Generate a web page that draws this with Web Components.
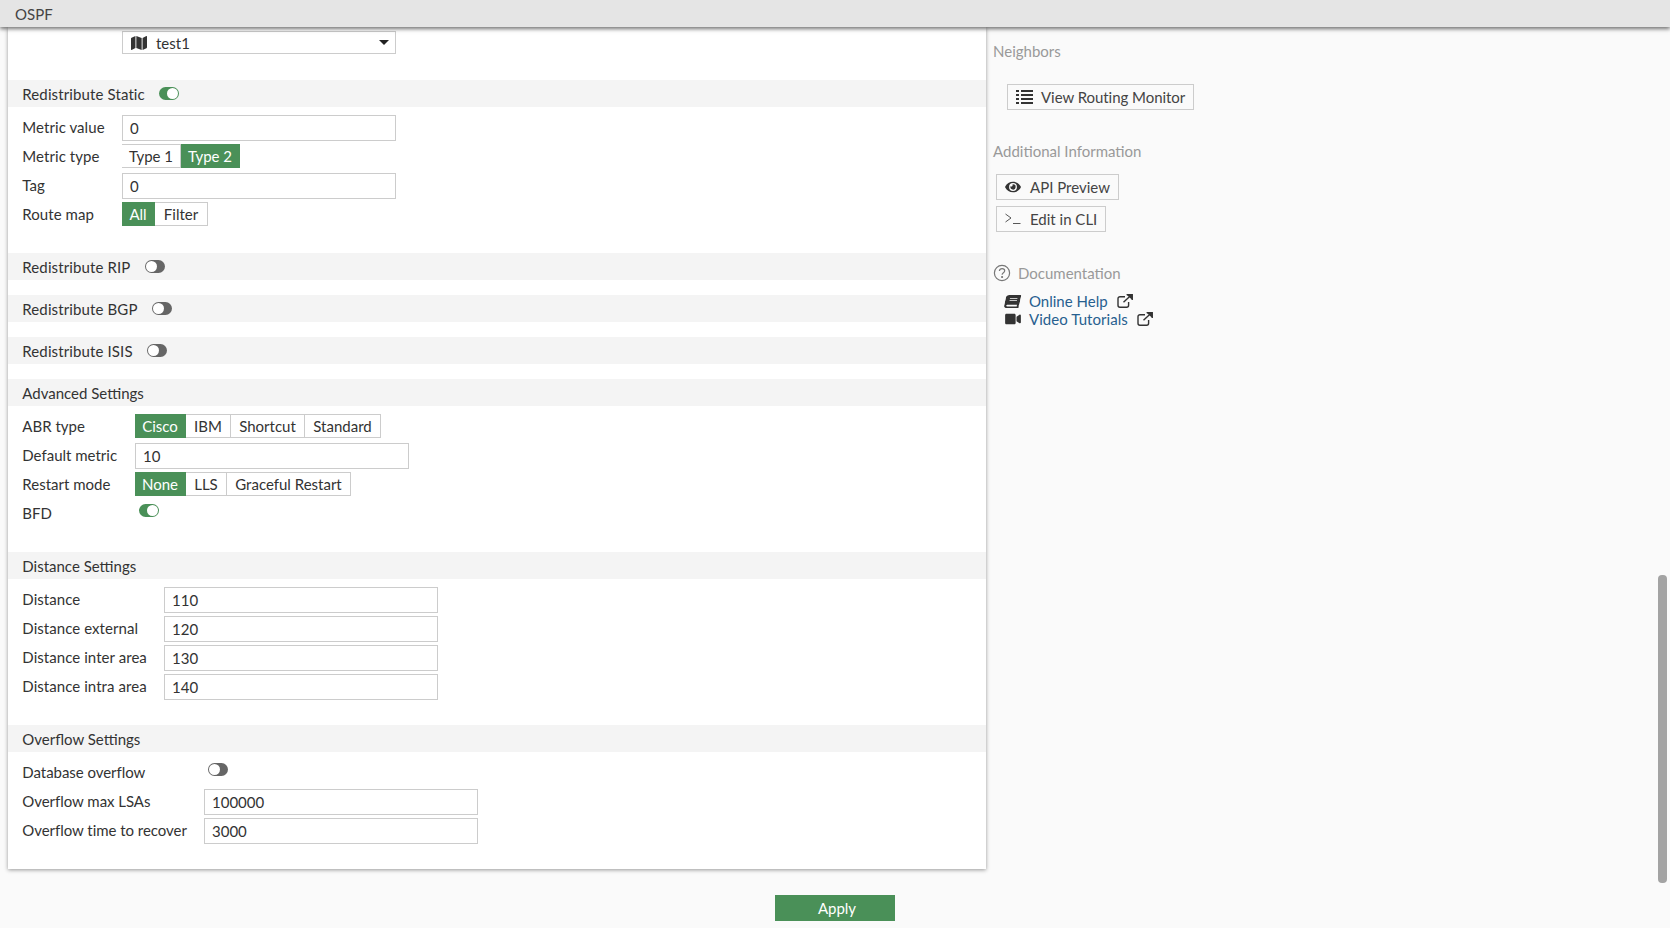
<!DOCTYPE html>
<html>
<head>
<meta charset="utf-8">
<title>OSPF</title>
<style>
  html, body { margin: 0; height: 100%; }
  body { background: #fafafa; color: #333; font: 15px Lato, "Open Sans", sans-serif; overflow: hidden; position: relative; }
</style>
</head>
<body>
<fg-topbar>OSPF</fg-topbar>
<fg-page>
  <fg-panel>
    <fg-row label-w="99" slot-only style="padding-top:4px;padding-bottom:26px;min-height:23px">
      <fg-select>test1</fg-select>
    </fg-row>

    <fg-section label="Redistribute Static" on label-w="99" style="--ls:.07px">
      <fg-row label="Metric value"><fg-input>0</fg-input></fg-row>
      <fg-row label="Metric type"><fg-seg options="Type 1|Type 2" widths="59|59" active="1"></fg-seg></fg-row>
      <fg-row label="Tag"><fg-input>0</fg-input></fg-row>
      <fg-row label="Route map"><fg-seg options="All|Filter" widths="33|53" active="0"></fg-seg></fg-row>
    </fg-section>

    <fg-section label="Redistribute RIP" off></fg-section>
    <fg-section label="Redistribute BGP" off></fg-section>
    <fg-section label="Redistribute ISIS" off></fg-section>

    <fg-section label="Advanced Settings" label-w="112">
      <fg-row label="ABR type"><fg-seg options="Cisco|IBM|Shortcut|Standard" widths="51|45|74|76" active="0"></fg-seg></fg-row>
      <fg-row label="Default metric"><fg-input>10</fg-input></fg-row>
      <fg-row label="Restart mode"><fg-seg options="None|LLS|Graceful Restart" widths="51|41|124" active="0"></fg-seg></fg-row>
      <fg-row label="BFD"><fg-toggle on inrow></fg-toggle></fg-row>
    </fg-section>

    <fg-section label="Distance Settings" label-w="141" style="--ls:.06px">
      <fg-row label="Distance"><fg-input>110</fg-input></fg-row>
      <fg-row label="Distance external"><fg-input>120</fg-input></fg-row>
      <fg-row label="Distance inter area"><fg-input>130</fg-input></fg-row>
      <fg-row label="Distance intra area"><fg-input>140</fg-input></fg-row>
    </fg-section>

    <fg-section label="Overflow Settings" label-w="181" style="--ls:-.04px">
      <fg-row label="Database overflow"><fg-toggle inrow></fg-toggle></fg-row>
      <fg-row label="Overflow max LSAs"><fg-input>100000</fg-input></fg-row>
      <fg-row label="Overflow time to recover"><fg-input>3000</fg-input></fg-row>
    </fg-section>
  </fg-panel>

  <fg-side>
    <fg-side-title>Neighbors</fg-side-title>
    <fg-btn icon="list" style="margin:23px 0 0 14px;letter-spacing:-.05px">View Routing Monitor</fg-btn>
    <fg-side-title style="margin-top:31px">Additional Information</fg-side-title>
    <fg-btn icon="eye" gap="9" style="margin:13px 0 0 3px">API Preview</fg-btn>
    <fg-btn icon="terminal" gap="9" style="margin:6px 0 0 3px">Edit in CLI</fg-btn>
    <fg-side-title icon="help" style="margin-top:31px">Documentation</fg-side-title>
    <fg-doc-link icon="book" style="margin-top:9px">Online Help</fg-doc-link>
    <fg-doc-link icon="video" style="letter-spacing:.06px">Video Tutorials</fg-doc-link>
  </fg-side>
</fg-page>
<fg-footer>Apply</fg-footer>
<fg-scrollbar></fg-scrollbar>

<script>
const ICONS = {
  list: '<svg width="17" height="14" viewBox="0 0 17 14" fill="#333"><rect x="0" y="0" width="3" height="2"/><rect x="5" y="0" width="12" height="2"/><rect x="0" y="4" width="3" height="2"/><rect x="5" y="4" width="12" height="2"/><rect x="0" y="8" width="3" height="2"/><rect x="5" y="8" width="12" height="2"/><rect x="0" y="12" width="3" height="2"/><rect x="5" y="12" width="12" height="2"/></svg>',
  eye: '<svg width="16" height="14" viewBox="0 0 576 512" fill="#333"><path d="M572.52 241.4C518.29 135.59 410.93 64 288 64S57.68 135.64 3.48 241.41a32.35 32.35 0 0 0 0 29.19C57.71 376.41 165.07 448 288 448s230.32-71.64 284.52-177.41a32.35 32.35 0 0 0 0-29.19zM288 400a144 144 0 1 1 144-144 143.93 143.93 0 0 1-144 144zm0-240a95.31 95.31 0 0 0-25.31 3.79 47.85 47.85 0 0 1-66.9 66.9A95.78 95.78 0 1 0 288 160z"/></svg>',
  terminal: '<svg width="16" height="12" viewBox="0 0 16 12" fill="none" stroke="#444" stroke-width=".9"><path d="M.5 1l5.5 4-5.5 4"/><path d="M8 10.5h7.5"/></svg>',
  help: '<svg width="18" height="18" viewBox="0 0 18 18" fill="none" stroke="#777" stroke-width="1.2"><circle cx="9" cy="9" r="7.6"/><path d="M6.4 7.1c0-1.6 1.2-2.5 2.7-2.5s2.6.9 2.6 2.2c0 1.9-2.6 1.9-2.6 3.9"/><circle cx="9.1" cy="13" r=".5" fill="#777"/></svg>',
  book: '<svg width="15" height="13" viewBox="0 0 448 512" preserveAspectRatio="none" fill="#333" style="transform:skewX(-12deg)"><path d="M448 360V24c0-13.3-10.7-24-24-24H96C43 0 0 43 0 96v320c0 53 43 96 96 96h328c13.3 0 24-10.7 24-24v-16c0-7.5-3.5-14.3-8.9-18.7-4.2-15.4-4.2-59.3 0-74.7 5.4-4.3 8.9-11.1 8.9-18.6zM128 134c0-3.3 2.7-6 6-6h212c3.3 0 6 2.7 6 6v20c0 3.3-2.7 6-6 6H134c-3.3 0-6-2.7-6-6v-20zm0 64c0-3.3 2.7-6 6-6h212c3.3 0 6 2.7 6 6v20c0 3.3-2.7 6-6 6H134c-3.3 0-6-2.7-6-6v-20zm253.4 250H96c-17.7 0-32-14.3-32-32 0-17.6 14.4-32 32-32h285.4c-1.9 17.1-1.9 46.9 0 64z"/></svg>',
  video: '<svg width="16" height="14" viewBox="0 0 576 512" fill="#333"><path d="M336.2 64H47.8C21.4 64 0 85.4 0 111.8v288.4C0 426.6 21.4 448 47.8 448h288.4c26.4 0 47.8-21.4 47.8-47.8V111.8c0-26.4-21.4-47.8-47.8-47.8zm189.4 37.7L416 177.3v157.4l109.6 75.5c21.2 14.6 50.4-.3 50.4-25.8V127.5c0-25.4-29.1-40.4-50.4-25.8z"/></svg>',
  external: '<svg width="16" height="14" viewBox="0 0 16 14" fill="none" stroke="#333" stroke-width="1.4"><path d="M8 2.7H3a2 2 0 0 0-2 2v6.6a2 2 0 0 0 2 2h6.6a2 2 0 0 0 2-2V8"/><path d="M6.5 8.2L14 1.2"/><path d="M9.6.7h5.7v5.4" stroke-width="1.3" fill="#333"/></svg>',
  map: '<svg width="16" height="16" viewBox="0 0 576 512" preserveAspectRatio="none" fill="#333"><path d="M0 117.66v346.32c0 11.32 11.43 19.06 21.94 14.86L160 416V32L20.12 87.95A32.006 32.006 0 0 0 0 117.66zM192 416l192 64V96L192 32v384zM554.06 33.16L416 96v384l139.88-55.95A31.996 31.996 0 0 0 576 394.34V48.02c0-11.32-11.43-19.06-21.94-14.86z"/></svg>'
};

// small helper so each element only states its css and markup
function define(name, css, html, setup) {
  customElements.define(name, class extends HTMLElement {
    connectedCallback() {
      const root = this.attachShadow({ mode: 'open' });
      root.innerHTML = `<style>${css}</style>` + (typeof html === 'function' ? html(this) : html);
      if (setup) setup(this, root);
    }
  });
}

define('fg-topbar', `
  :host { display: block; height: 27px; background: #e5e5e5; box-shadow: 0 2px 4px rgba(0,0,0,.55);
    position: relative; z-index: 2; padding-left: 15px; line-height: 29px; color: #444; }
`, '<slot></slot>');

define('fg-page', `
  :host { display: flex; height: 842px; align-items: flex-start; }
`, '<slot></slot>');

define('fg-panel', `
  :host { display: block; width: 978px; margin-left: 8px; background: #fff; box-shadow: 0 1px 4px rgba(0,0,0,.4); height: 842px; --label-w: 99px; }
`, '<slot></slot>');

define('fg-section', `
  :host { display: block; --label-w: 99px; }
  .bar { display: flex; align-items: center; height: 27px; background: #f4f4f4; padding-left: 14.3px; }
  .bar.with-toggle span { letter-spacing: .12px; }
  fg-toggle { margin-left: 14.5px; }
  .body { padding: 8px 0 22px; }
  :host(:not([has-body])) .body { padding: 0 0 15px; }
`, el => `
  <div class="bar ${el.hasAttribute('on') || el.hasAttribute('off') ? 'with-toggle' : ''}"><span>${el.getAttribute('label')}</span>${el.hasAttribute('on') ? '<fg-toggle on></fg-toggle>' : el.hasAttribute('off') ? '<fg-toggle></fg-toggle>' : ''}</div>
  <div class="body"><slot></slot></div>
`, el => {
  if (el.children.length) el.setAttribute('has-body', '');
  if (el.hasAttribute('label-w')) el.style.setProperty('--label-w', el.getAttribute('label-w') + 'px');
});

define('fg-row', `
  :host { display: grid; grid-template-columns: var(--label-w) 1fr; align-items: start; min-height: 26px; margin-bottom: 3px; padding-left: 15px; }
  :host([slot-only]) { margin-bottom: 0; }
  span { margin-left: -.7px; line-height: 24px; letter-spacing: var(--ls, 0); }
`, el => `<span>${el.getAttribute('label') || ''}</span><div><slot></slot></div>`);

define('fg-input', `
  :host { display: block; box-sizing: border-box; width: 274px; height: 26px; border: 1px solid #ccc; background: #fff; padding: 0 7px; line-height: 24px; }
`, '<slot></slot>');

define('fg-select', `
  :host { display: flex; align-items: center; box-sizing: border-box; width: 274px; height: 23px; border: 1px solid #ccc; padding: 0 6px 0 8px; line-height: 21px; }
  svg { flex: none; margin-right: 9px; }
  .t { padding-top: 2px; }
  .caret { margin-left: auto; width: 0; height: 0; border: 5px solid transparent; border-top: 5px solid #222; border-bottom: 0; }
`, `${ICONS.map}<span class="t"><slot></slot></span><span class="caret"></span>`);

define('fg-seg', `
  :host { display: flex; height: 24px; }
  span { box-sizing: border-box; border: 1px solid #ccc; border-left-width: 0; line-height: 22px; background: #fff; text-align: center; }
  span:first-child { border-left-width: 1px; padding-left: 1.5px; }
  .active { background: #4a9058; border-color: #4a9058; color: #fff; }
`, el => {
  const widths = el.getAttribute('widths').split('|');
  return el.getAttribute('options').split('|').map((o, i) =>
    `<span style="width:${widths[i]}px" class="${i === +el.getAttribute('active') ? 'active' : ''}">${o}</span>`).join('');
});

define('fg-toggle', `
  :host { display: inline-block; box-sizing: border-box; width: 20px; height: 13px; border-radius: 7px; background: #666; position: relative; flex: none; }
  :host([on]) { background: #4a9058; }
  :host([inrow]) { margin: 3px 0 0 4px; display: block; }
  i { position: absolute; left: 1px; top: 1px; width: 11px; height: 11px; border-radius: 50%; background: #fff; }
  :host([on]) i { left: 8px; }
`, '<i></i>');

define('fg-side', `
  :host { display: block; flex: 1; padding: 14px 0 0 7px; }
`, '<slot></slot>');

define('fg-side-title', `
  :host { display: flex; align-items: center; height: 20px; color: #999; }
  svg { margin-right: 7px; }
`, el => (el.getAttribute('icon') ? ICONS[el.getAttribute('icon')] : '') + '<slot></slot>');

define('fg-btn', `
  :host { display: flex; width: max-content; align-items: center; box-sizing: border-box; height: 26px; border: 1px solid #ccc; padding: 0 8px; color: #444; }
  svg { flex: none; margin-right: var(--gap, 8px); }
`, el => ICONS[el.getAttribute('icon')] + '<slot></slot>', el => {
  if (el.hasAttribute('gap')) el.style.setProperty('--gap', el.getAttribute('gap') + 'px');
});

define('fg-doc-link', `
  :host { display: flex; align-items: center; height: 18px; margin-left: 12px; color: #27608f; }
  .ic { flex: none; width: 24px; display: flex; align-items: center; }
  .ext { display: flex; margin-left: 9px; }
`, el => `<span class="ic">${ICONS[el.getAttribute('icon')]}</span><slot></slot><span class="ext">${ICONS.external}</span>`);

define('fg-footer', `
  :host { display: flex; justify-content: center; padding-top: 26px; }
  span { display: block; box-sizing: border-box; width: 120px; height: 26px; padding-left: 4px; background: #4a9058; color: #fff; text-align: center; line-height: 26px; }
`, '<span><slot></slot></span>');

define('fg-scrollbar', `
  :host { position: absolute; left: 1658px; top: 575px; width: 9px; height: 308px; border-radius: 4px; background: #a3a3a3; }
`, '');
</script>
</body>
</html>
